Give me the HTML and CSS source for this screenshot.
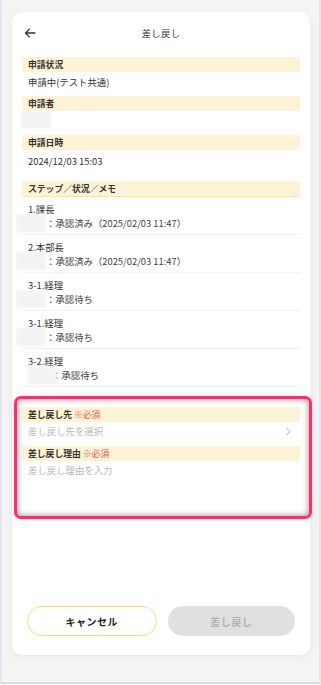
FILE: index.html
```html
<!DOCTYPE html>
<html lang="ja">
<head>
    <meta charset="UTF-8">
    <meta name="viewport" content="width=device-width, initial-scale=1.0">
    <title>差し戻し</title>
    <link rel="stylesheet" href="styles.css">
</head>
<body>
    <div class="frame">
        <div class="card">
            <div class="header">
                <button class="back" aria-label="戻る">
                    <svg width="12" height="12" viewBox="0 0 12 12"><path d="M11 6H1.6M5.4 2.1L1.5 6l3.9 3.9" fill="none" stroke="#333" stroke-width="1.3" stroke-linecap="round" stroke-linejoin="round"/></svg>
                </button>
                <h1 class="title">差し戻し</h1>
                <span></span>
            </div>

            <div class="label">申請状況</div>
            <div class="value">申請中(テスト共通)</div>

            <div class="label">申請者</div>
            <div class="value-blank"><span class="blur"></span></div>

            <div class="label">申請日時</div>
            <div class="value value-date">2024/12/03 15:03</div>

            <div class="label label-line">ステップ／状況／メモ</div>
            <ul class="steps">
                <li class="step">
                    <div class="step-name">1.課長</div>
                    <div class="step-status"><span class="blur blur-out"></span>：承認済み（2025/02/03 11:47）</div>
                </li>
                <li class="step">
                    <div class="step-name">2.本部長</div>
                    <div class="step-status"><span class="blur blur-out"></span>：承認済み（2025/02/03 11:47）</div>
                </li>
                <li class="step">
                    <div class="step-name">3-1.経理</div>
                    <div class="step-status"><span class="blur blur-out"></span>：承認待ち</div>
                </li>
                <li class="step">
                    <div class="step-name">3-1.経理</div>
                    <div class="step-status"><span class="blur blur-out"></span>：承認待ち</div>
                </li>
                <li class="step">
                    <div class="step-name">3-2.経理</div>
                    <div class="step-status"><span class="blur blur-in"></span><span class="colon-tight">：承認待ち</span></div>
                </li>
            </ul>

            <div class="form">
                <div class="label">差し戻し先 <span class="req">※必須</span></div>
                <div class="select">
                    <span>差し戻し先を選択</span>
                    <svg width="7" height="9" viewBox="0 0 7 9"><path d="M1.2 0.8L5.2 4.5L1.2 8.2" fill="none" stroke="#a8a8a8" stroke-width="1"/></svg>
                </div>
                <div class="label">差し戻し理由 <span class="req">※必須</span></div>
                <div class="textarea">差し戻し理由を入力</div>
                <div class="highlight"></div>
            </div>

            <div class="actions">
                <button class="btn btn-cancel">キャンセル</button>
                <button class="btn btn-submit" disabled>差し戻し</button>
            </div>
        </div>
    </div>
</body>
</html>
```

FILE: styles.css
```css
* {
    margin: 0;
    padding: 0;
    box-sizing: border-box;
}

body {
    font-family: 'Noto Sans CJK JP', 'Noto Sans', sans-serif;
    background: #ffffff;
    color: #333;
}

.frame {
    height: 684px;
    background: #f4f4f5;
    border-left: 2px solid #e2e6ee;
    border-right: 2px solid #e2e6ee;
    border-bottom: 2px solid #d9dde6;
    padding: 12px 9px 0 10px;
}

.card {
    background: white;
    height: 643px;
    border-radius: 10px;
    box-shadow: 0 2px 8px rgba(0, 0, 0, 0.05);
    padding: 0 10px;
    display: flex;
    flex-direction: column;
}

.header {
    height: 42px;
    margin-bottom: 3px;
    display: grid;
    grid-template-columns: 1fr auto 1fr;
    align-items: center;
}

.back {
    border: none;
    background: none;
    width: 12px;
    height: 12px;
    margin-left: 2px;
    display: flex;
}

.title {
    font-size: 9.4px;
    font-weight: 400;
    color: #333;
    letter-spacing: 0.3px;
}

.label {
    background: #fff3d6;
    height: 15px;
    line-height: 15px;
    font-size: 8.8px;
    font-weight: 700;
    padding: 0 6px;
    color: #333;
}

.label-line {
    height: 16px;
    border-bottom: 1px solid #fbe4a0;
}

.req {
    color: #e65a50;
    font-weight: 400;
}

.value {
    font-size: 9.4px;
    line-height: 16px;
    padding: 2px 6px 6px;
    color: #333;
}

.value-date {
    padding: 3px 6px 12px;
}

.value-blank {
    height: 24px;
    padding-top: 1px;
}

.value-blank .blur {
    display: block;
    margin-left: -1px;
    height: 16px;
}

.blur {
    display: inline-block;
    width: 30px;
    height: 18px;
    background: #f3f3f3;
    filter: blur(1px);
}

.steps {
    list-style: none;
}

.step {
    padding: 5px 6px 4px;
    border-bottom: 1px solid #efefef;
    font-size: 9.4px;
    line-height: 14px;
    color: #333;
}

.step-status {
    display: flex;
    align-items: center;
    height: 14px;
    color: #444;
}

.step-status .blur {
    margin: -2px 0;
    flex-shrink: 0;
}

.blur-out {
    margin-left: -12px !important;
}

.blur-in {
    width: 29px !important;
}

.colon-tight {
    margin-left: -5px;
}

.form {
    position: relative;
    margin-top: 20px;
}

.select {
    height: 24px;
    padding: 1px 8px 7px 6px;
    font-size: 9.4px;
    line-height: 16px;
    color: #b9b9b9;
    display: flex;
    justify-content: space-between;
    align-items: center;
}

.textarea {
    height: 50px;
    padding: 1px 6px;
    font-size: 9.4px;
    line-height: 16px;
    color: #b9b9b9;
}

.highlight {
    position: absolute;
    top: -11px;
    left: -8px;
    right: -12px;
    bottom: -8px;
    border: 3.5px solid #ff2d6d;
    border-radius: 7px;
    box-shadow: inset 0 0 6px rgba(0, 0, 0, 0.45), 0 0 4px rgba(0, 0, 0, 0.15);
    pointer-events: none;
}

.actions {
    margin-top: auto;
    padding: 0 5px 19px;
    display: flex;
    gap: 11px;
}

.btn {
    flex: 1;
    height: 30px;
    border-radius: 15px;
    font-family: inherit;
    font-size: 10px;
    font-weight: 700;
    letter-spacing: 0.5px;
}

.btn-cancel {
    background: white;
    border: 1px solid #f8dc76;
    color: #222;
}

.btn-submit {
    background: #e0e0e0;
    border: none;
    color: #b2b2b2;
}
```
